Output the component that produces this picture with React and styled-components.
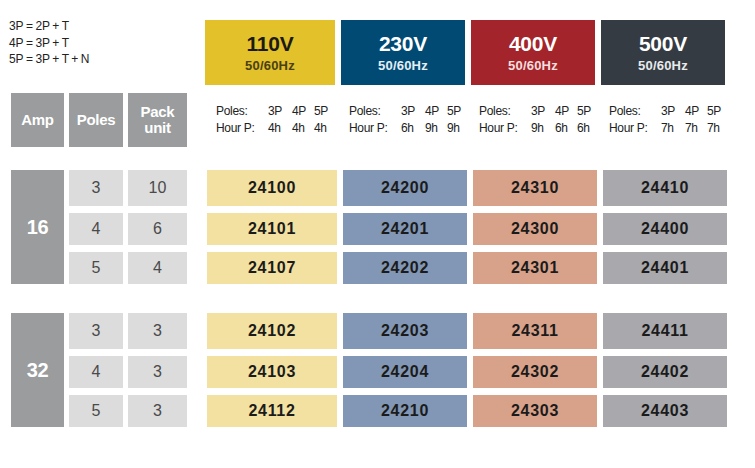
import styled, { createGlobalStyle } from "styled-components";

const GlobalStyle = createGlobalStyle`
  html, body {
    margin: 0;
    padding: 0;
    background: #ffffff;
  }
  body {
    font-family: "Liberation Sans", Arial, sans-serif;
  }
`;

const voltages = [
  {
    volt: "110V", head: "#e2c12b", headText: "#1c1a14", subText: "#4b3f14", cell: "#f2e1a0",
    hours: ["4h", "4h", "4h"],
    codes: [["24100", "24101", "24107"], ["24102", "24103", "24112"]],
  },
  {
    volt: "230V", head: "#004a74", headText: "#ffffff", subText: "#e6eef5", cell: "#8197b5",
    hours: ["6h", "9h", "9h"],
    codes: [["24200", "24201", "24202"], ["24203", "24204", "24210"]],
  },
  {
    volt: "400V", head: "#a3242a", headText: "#ffffff", subText: "#f4dede", cell: "#d8a28a",
    hours: ["9h", "6h", "6h"],
    codes: [["24310", "24300", "24301"], ["24311", "24302", "24303"]],
  },
  {
    volt: "500V", head: "#343b43", headText: "#ffffff", subText: "#e8eaec", cell: "#a8a8ad",
    hours: ["7h", "7h", "7h"],
    codes: [["24410", "24400", "24401"], ["24411", "24402", "24403"]],
  },
];

const groups = [
  { amp: "16", rows: [["3", "10"], ["4", "6"], ["5", "4"]] },
  { amp: "32", rows: [["3", "3"], ["4", "3"], ["5", "3"]] },
];

const Page = styled.div`
  width: 755px;
  height: 468px;
  padding: 20px 0 0 11px;
  box-sizing: border-box;
`;

const Band = styled.div`
  display: flex;
  gap: 20px;
  margin-bottom: ${(p) => p.$after || 0}px;
`;

const LeftGrid = styled.div`
  width: 176px;
  display: grid;
  grid-template-columns: 53px 54px 59px;
  grid-template-rows: ${(p) => p.$rows || "auto"};
  column-gap: 5px;
  row-gap: 7px;
  flex-shrink: 0;
`;

const RightGrid = styled.div`
  display: grid;
  grid-template-columns: 130px 124px 124px 124px;
  grid-template-rows: ${(p) => p.$rows || "auto"};
  column-gap: 6px;
  row-gap: 7px;
`;

const Formula = styled.div`
  width: 176px;
  margin: -2px 0 0 -2px;
  font-size: 12px;
  line-height: 16.5px;
  letter-spacing: -0.1px;
  word-spacing: -0.6px;
  color: #222;
`;

const VoltHead = styled.div`
  height: 65px;
  background: ${(p) => p.$bg};
  color: ${(p) => p.$fg};
  display: flex;
  flex-direction: column;
  align-items: center;
  justify-content: center;
  padding-top: 1px;
  box-sizing: border-box;
`;

const Volt = styled.div`
  font-size: 21px;
  font-weight: bold;
  line-height: 24px;
  letter-spacing: -0.2px;
`;

const Hz = styled.div`
  font-size: 13px;
  font-weight: bold;
  line-height: 16px;
  letter-spacing: 0.2px;
  color: ${(p) => p.$fg};
  margin-top: 2px;
`;

const ColHead = styled.div`
  height: 54px;
  background: #9a9c9d;
  color: #ffffff;
  font-size: 15px;
  font-weight: bold;
  line-height: 16px;
  letter-spacing: -0.3px;
  display: flex;
  align-items: center;
  justify-content: center;
  text-align: center;
`;

const PolesInfo = styled.div`
  display: grid;
  grid-template-columns: 52px 24px 22px auto;
  align-content: start;
  align-self: start;
  width: 116px;
  margin: 10px auto 0;
  font-size: 12px;
  line-height: 17px;
  letter-spacing: -0.3px;
  color: #222;
  transform: translateX(2px);
`;

const AmpCell = styled.div`
  grid-row: 1 / span 3;
  background: #9a9c9d;
  color: #ffffff;
  font-size: 20px;
  font-weight: bold;
  display: flex;
  align-items: center;
  justify-content: center;
  letter-spacing: -0.3px;
`;

const SpecCell = styled.div`
  grid-row: ${(p) => p.$row};
  grid-column: ${(p) => p.$col};
  background: #dcdcdc;
  color: #4a4a4a;
  font-size: 16px;
  display: flex;
  align-items: center;
  justify-content: center;
`;

const CodeCell = styled.div`
  background: ${(p) => p.$bg};
  color: #1b1b1b;
  font-size: 16px;
  font-weight: bold;
  letter-spacing: 0.7px;
  display: flex;
  align-items: center;
  justify-content: center;
`;

const rowTemplate = "36px 32px 32px";

export default function App() {
  return (
    <>
      <GlobalStyle />
      <Page>
        <Band $after={8}>
          <Formula>
            <div>3P = 2P + T</div>
            <div>4P = 3P + T</div>
            <div>5P = 3P + T + N</div>
          </Formula>
          <RightGrid>
            {voltages.map((v) => (
              <VoltHead key={v.volt} $bg={v.head} $fg={v.headText}>
                <Volt>{v.volt}</Volt>
                <Hz $fg={v.subText}>50/60Hz</Hz>
              </VoltHead>
            ))}
          </RightGrid>
        </Band>

        <Band $after={23}>
          <LeftGrid>
            <ColHead>Amp</ColHead>
            <ColHead>Poles</ColHead>
            <ColHead>
              Pack
              <br />
              unit
            </ColHead>
          </LeftGrid>
          <RightGrid>
            {voltages.map((v) => (
              <PolesInfo key={v.volt}>
                <span>Poles:</span>
                <span>3P</span>
                <span>4P</span>
                <span>5P</span>
                <span>Hour P:</span>
                {v.hours.map((h, i) => (
                  <span key={i}>{h}</span>
                ))}
              </PolesInfo>
            ))}
          </RightGrid>
        </Band>

        {groups.map((g, gi) => (
          <Band key={g.amp} $after={gi === 0 ? 29 : 0}>
            <LeftGrid $rows={rowTemplate}>
              <AmpCell>{g.amp}</AmpCell>
              {g.rows.map(([poles, pack], ri) => [
                <SpecCell key={`p${ri}`} $row={ri + 1} $col={2}>
                  {poles}
                </SpecCell>,
                <SpecCell key={`u${ri}`} $row={ri + 1} $col={3}>
                  {pack}
                </SpecCell>,
              ])}
            </LeftGrid>
            <RightGrid $rows={rowTemplate}>
              {[0, 1, 2].map((ri) =>
                voltages.map((v) => (
                  <CodeCell key={`${v.volt}-${ri}`} $bg={v.cell}>
                    {v.codes[gi][ri]}
                  </CodeCell>
                ))
              )}
            </RightGrid>
          </Band>
        ))}
      </Page>
    </>
  );
}
